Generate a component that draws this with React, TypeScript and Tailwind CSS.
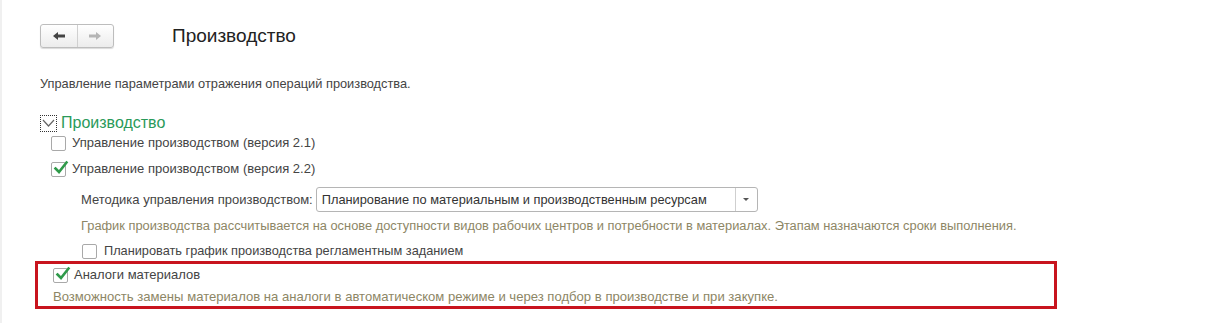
import React from "react";

const font = { fontFamily: '"Liberation Sans", Arial, sans-serif' };

function Check({ checked }: { checked?: boolean }) {
  return (
    <span className="relative inline-block w-[15px] h-[15px] shrink-0 rounded-[2px] border border-[#a9a9a9] bg-white">
      {checked && (
        <svg className="absolute left-[1px] top-[-3px]" width="16" height="16" viewBox="0 0 16 16">
          <path d="M2.5 8.5 L6 12 L13.5 2.5" fill="none" stroke="#2f9a4a" strokeWidth="2.6" strokeLinecap="square" />
        </svg>
      )}
    </span>
  );
}

export default function App() {
  return (
    <div className="w-[1209px] h-[323px] bg-white text-[#333] text-[13px] relative overflow-hidden border-l-[2px] border-[#f0f0f0]" style={font}>
      <div className="pl-[38px] pt-[24px]">
        <div className="flex items-center">
          <div className="flex h-[24px] w-[74px] rounded-[3px] border border-[#bdbdbd] bg-gradient-to-b from-white to-[#ececec] shadow-[0_1px_1px_rgba(0,0,0,0.15)]">
            <div className="flex-1 flex items-center justify-center border-r border-[#d0d0d0]">
              <svg width="14" height="10" viewBox="0 0 14 10">
                <path d="M1 5 L6 1 L6 3.5 L13 3.5 L13 6.5 L6 6.5 L6 9 Z" fill="#444" />
              </svg>
            </div>
            <div className="flex-1 flex items-center justify-center">
              <svg width="14" height="10" viewBox="0 0 14 10">
                <path d="M13 5 L8 1 L8 3.5 L1 3.5 L1 6.5 L8 6.5 L8 9 Z" fill="#b5b5b5" />
              </svg>
            </div>
          </div>
          <div className="ml-[58px] text-[19px] text-[#222] leading-[24px]">Производство</div>
        </div>

        <div className="mt-[28px] leading-[16px] text-[12.8px] text-[#444]">Управление параметрами отражения операций производства.</div>

        <div className="mt-[22px] flex items-center h-[18px]">
          <span className="w-[17px] h-[17px] border border-dotted border-[#333] flex items-center justify-center">
            <svg width="13" height="9" viewBox="0 0 13 9">
              <path d="M1 1 L6.5 7 L12 1" fill="none" stroke="#666" strokeWidth="1.2" />
            </svg>
          </span>
          <span className="ml-[4px] text-[16px] text-[#2a9a5a] leading-[18px]">Производство</span>
        </div>

        <div className="ml-[11px] mt-[2px] flex items-center gap-[6px] h-[18px] text-[#444]">
          <Check />
          <span>Управление производством (версия 2.1)</span>
        </div>
        <div className="ml-[11px] mt-[8px] flex items-center gap-[6px] h-[18px] text-[#444]">
          <Check checked />
          <span>Управление производством (версия 2.2)</span>
        </div>

        <div className="ml-[41px] mt-[9px] flex items-center">
          <span className="text-[#444]">Методика управления производством:</span>
          <div className="ml-[3px] flex h-[25px] w-[442px] rounded-[3px] border border-[#b5b5b5] bg-white">
            <div className="flex-1 flex items-center pl-[5px] text-[#333] text-[12.8px]">Планирование по материальным и производственным ресурсам</div>
            <div className="w-[22px] border-l border-[#cfcfcf] flex items-center justify-center">
              <svg width="6" height="4" viewBox="0 0 6 4"><path d="M0 0 L6 0 L3 3 Z" fill="#555" /></svg>
            </div>
          </div>
        </div>

        <div className="ml-[41px] mt-[6px] leading-[16px] text-[12.85px] text-[#8d8665]">График производства рассчитывается на основе доступности видов рабочих центров и потребности в материалах. Этапам назначаются сроки выполнения.</div>

        <div className="ml-[42px] mt-[8px] flex items-center gap-[7px] h-[18px] text-[#444]">
          <Check />
          <span className="text-[12.75px]">Планировать график производства регламентным заданием</span>
        </div>

        <div className="ml-[-5px] mt-[1px] w-[1022px] h-[48px] border-[3px] border-[#c8141e] pl-[15px] pt-[2px]">
          <div className="flex items-center gap-[6px] h-[18px] text-[#444]">
            <Check checked />
            <span>Аналоги материалов</span>
          </div>
          <div className="mt-[5px] leading-[16px] text-[#8d8665] text-[13.1px]">Возможность замены материалов на аналоги в автоматическом режиме и через подбор в производстве и при закупке.</div>
        </div>
      </div>
    </div>
  );
}
